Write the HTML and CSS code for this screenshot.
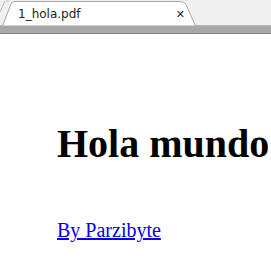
FILE: index.html
```html
<!DOCTYPE html>
<html>
<head>
<meta charset="utf-8">
<link rel="stylesheet" href="styles.css">
</head>
<body>
<div class="chrome">
  <div class="tabstrip">
    <svg class="prev-tab" width="12" height="26" viewBox="0 0 12 26">
      <path d="M0 12 L5 1" stroke="#b5b5b5" fill="none"/>
      <path d="M5.5 1 L9 1" stroke="#c8c8c8" fill="none"/>
    </svg>
    <div class="tab">
      <svg class="tab-shape" width="200" height="26" viewBox="0 0 200 26">
        <path d="M2.5 26 L11 4 Q12 1.5 15 1.5 L180 1.5 Q184 1.5 186 4.5 L195.5 26 Z" fill="#ffffff" stroke="#a9a9a9"/>
      </svg>
      <span class="tab-title">1_hola.pdf</span>
      <span class="tab-close">✕</span>
    </div>
  </div>
  <div class="toolbar"></div>
</div>
<main class="page">
  <h1 class="title">Hola mundo</h1>
  <a class="byline" href="#">By Parzibyte</a>
</main>
</body>
</html>
```

FILE: styles.css
```css
html, body {
  margin: 0;
  padding: 0;
  background: #ffffff;
}

.chrome {
  display: flex;
  flex-direction: column;
}

.tabstrip {
  position: relative;
  height: 25px;
  background: #f0f0f0;
  display: flex;
}

.prev-tab {
  position: absolute;
  left: 0;
  top: 0;
}

.tab {
  position: relative;
  margin-left: 2px;
  width: 196px;
  height: 25px;
  display: flex;
  align-items: center;
  padding-left: 16px;
  box-sizing: border-box;
}

.tab-shape {
  position: absolute;
  left: -2px;
  top: 0;
}

.tab-title {
  position: relative;
  font-family: "DejaVu Sans", sans-serif;
  font-size: 12px;
  color: #222222;
  padding-top: 2px;
}

.tab-close {
  position: relative;
  margin-left: auto;
  margin-right: 13px;
  font-family: "DejaVu Sans", sans-serif;
  font-size: 11px;
  font-weight: bold;
  color: #2a2a2a;
  padding-top: 3px;
}

.toolbar {
  height: 7px;
  background: #a8a8a8;
  border-top: 1px solid #b8b8b8;
  border-bottom: 1px solid #7f7f7f;
}

.page {
  padding-left: 57px;
  display: flex;
  flex-direction: column;
  align-items: flex-start;
}

.title {
  margin: 86px 0 0 0;
  font-family: "Liberation Serif", serif;
  font-size: 40px;
  font-weight: bold;
  color: #000000;
}

.byline {
  margin-top: 52px;
  font-family: "Liberation Serif", serif;
  font-size: 20px;
  color: #0000ee;
  text-decoration: underline;
}
```
